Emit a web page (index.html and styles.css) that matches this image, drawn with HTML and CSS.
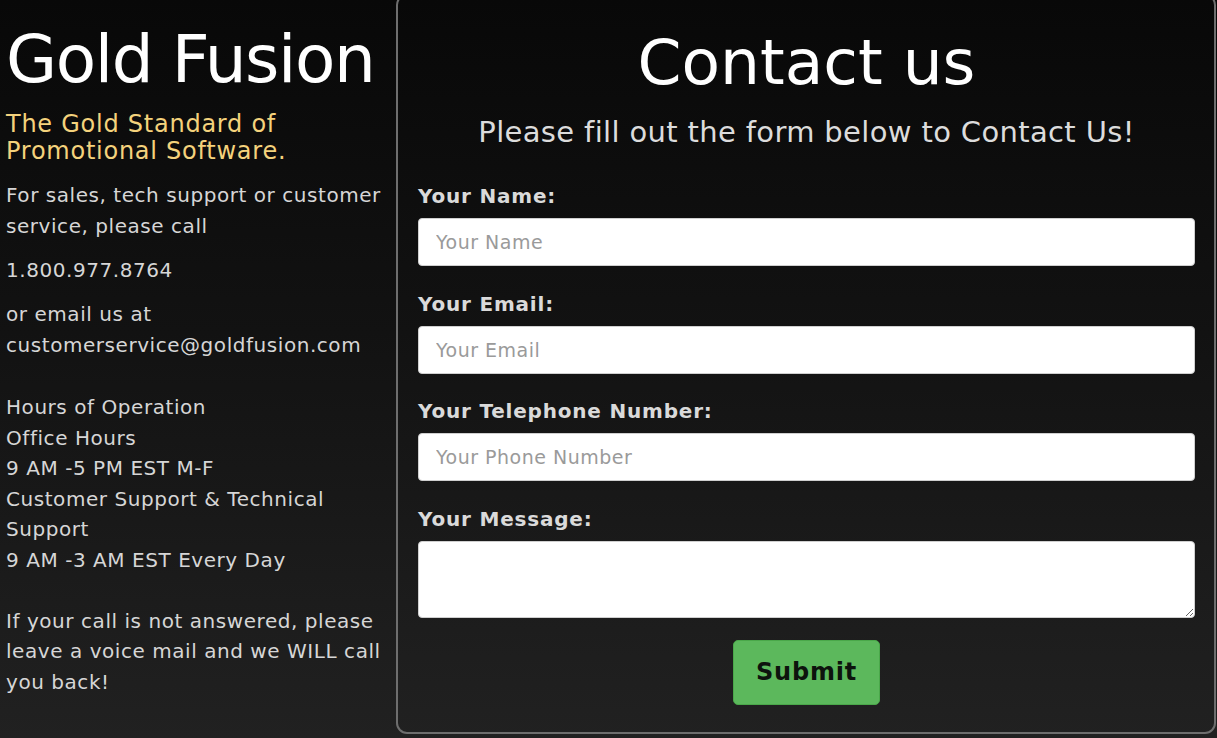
FILE: index.html
```html
<!DOCTYPE html>
<html lang="en">
<head>
<meta charset="utf-8">
<title>Gold Fusion - Contact us</title>
<link rel="stylesheet" href="styles.css">
</head>
<body>
<div class="page">
  <aside class="info">
    <h1 class="brand">Gold Fusion</h1>
    <p class="tagline">The Gold Standard of Promotional Software.</p>
    <p class="txt first">For sales, tech support or customer service, please call</p>
    <p class="txt">1.800.977.8764</p>
    <p class="txt">or email us at customerservice@goldfusion.com</p>
    <p class="txt hours">Hours of Operation<br>Office Hours<br>9 AM -5 PM EST M-F<br>Customer Support &amp; Technical Support<br>9 AM -3 AM EST Every Day<br><br>If your call is not answered, please leave a voice mail and we WILL call you back!</p>
  </aside>
  <main class="panel">
    <h2 class="title">Contact us</h2>
    <p class="subtitle">Please fill out the form below to Contact Us!</p>
    <form class="form">
      <label class="label" for="name">Your Name:</label>
      <input class="field" id="name" type="text" placeholder="Your Name">
      <label class="label" for="email">Your Email:</label>
      <input class="field" id="email" type="email" placeholder="Your Email">
      <label class="label" for="phone">Your Telephone Number:</label>
      <input class="field" id="phone" type="tel" placeholder="Your Phone Number">
      <label class="label" for="msg">Your Message:</label>
      <textarea class="field area" id="msg"></textarea>
      <div class="actions"><button class="submit" type="button">Submit</button></div>
    </form>
  </main>
</div>
</body>
</html>
```
FILE: styles.css
```css
html, body {
  margin: 0;
  padding: 0;
}
body {
  height: 738px;
  overflow: hidden;
  background: linear-gradient(to bottom, #080808 0%, #121212 45%, #212121 100%);
  font-family: "DejaVu Sans", Verdana, sans-serif;
  color: #d9d9d9;
}
.page {
  display: flex;
  align-items: flex-start;
}
.info {
  width: 388px;
  flex: 0 0 388px;
  padding-left: 6px;
  padding-right: 2px;
}
.brand {
  margin: 18px 0 0;
  font-size: 66px;
  line-height: 84px;
  letter-spacing: -1.4px;
  font-weight: normal;
  color: #ffffff;
  white-space: nowrap;
}
.tagline {
  margin: 9px 0 0;
  font-size: 24px;
  line-height: 27px;
  letter-spacing: 0.75px;
  color: #f4d27c;
  width: 300px;
}
.txt {
  margin: 13px 0 0;
  font-size: 20px;
  line-height: 31px;
  letter-spacing: 0.55px;
  color: #d6d6d6;
}
.txt.first {
  margin-top: 15px;
}
.hours {
  margin-top: 31px;
  line-height: 30.5px;
}
.panel {
  flex: 1;
  box-sizing: border-box;
  height: 740px;
  margin-top: -6px;
  margin-right: 1px;
  border: 2px solid #6e6e6e;
  border-radius: 11px;
  padding: 31px 19px 0 20px;
}
.title {
  margin: 0;
  text-align: center;
  font-size: 63px;
  line-height: 72px;
  font-weight: normal;
  color: #ffffff;
}
.subtitle {
  margin: 16px 0 0;
  text-align: center;
  font-size: 29px;
  line-height: 34px;
  letter-spacing: 0.35px;
  color: #dcdcdc;
}
.form {
  margin-top: 35px;
  display: flex;
  flex-direction: column;
}
.label {
  font-size: 20px;
  line-height: 24px;
  font-weight: bold;
  letter-spacing: 0.8px;
  color: #dadada;
}
.field {
  box-sizing: border-box;
  width: 100%;
  height: 48px;
  margin: 10px 0 25.5px;
  border: 1px solid #cfcfcf;
  border-radius: 4px;
  background: #ffffff;
  padding: 0 17px;
  font-family: "DejaVu Sans", Verdana, sans-serif;
  font-size: 19px;
  letter-spacing: 0.5px;
  color: #333;
}
.field::placeholder {
  color: #9a9a9a;
}
.area {
  height: 77px;
  margin-bottom: 22px;
  resize: vertical;
}
.actions {
  display: flex;
  justify-content: center;
}
.submit {
  width: 147px;
  height: 65px;
  border: 1px solid #4aa84a;
  border-radius: 5px;
  background: #5cb85c;
  color: #0d130d;
  font-family: "DejaVu Sans", Verdana, sans-serif;
  font-size: 24px;
  letter-spacing: 0.8px;
  font-weight: bold;
}
```
